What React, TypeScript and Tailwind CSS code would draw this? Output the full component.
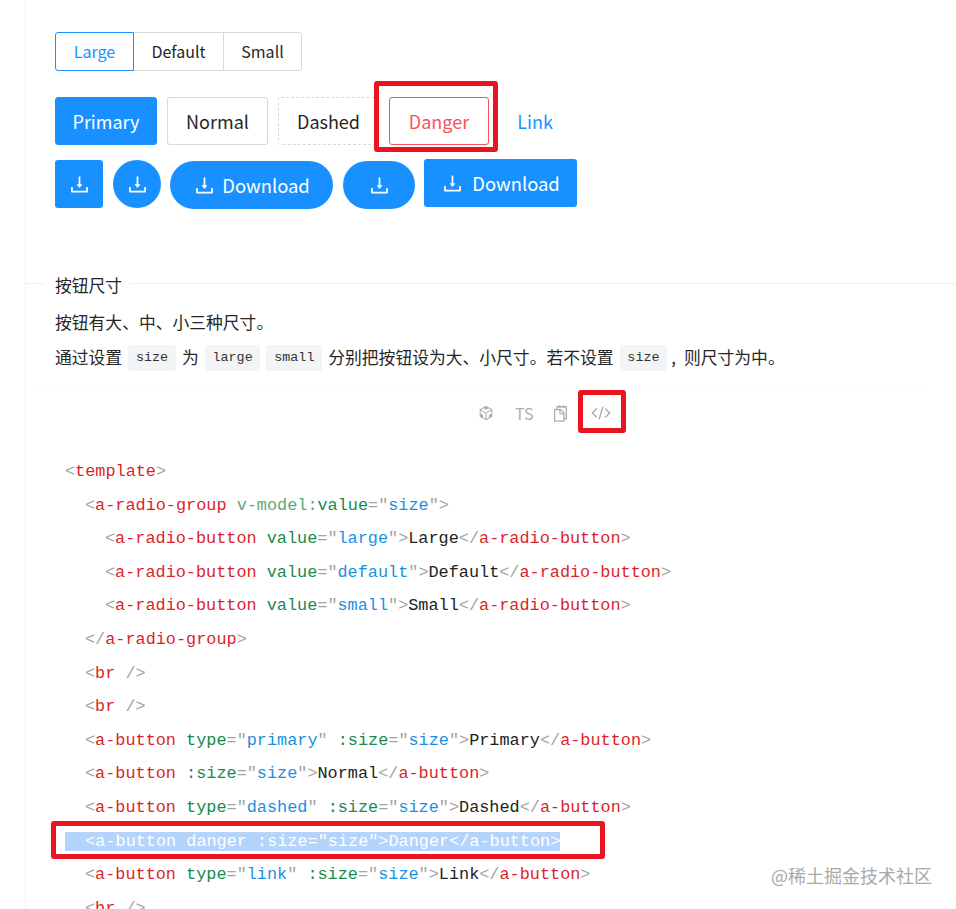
import { AiOutlineCodeSandbox, AiOutlineDownload, AiOutlineSnippets } from 'react-icons/ai';

const P = 'text-[#a3a3a3]';
const T = 'text-[#dc1f2a]';
const A = 'text-[#178a4c]';
const M = 'text-[#5aa97c]';
const V = 'text-[#1a8fe3]';
const X = 'text-[#222222]';

type Token = [string, string];

const open = (name: string): Token[] => [[P, '<'], [T, name]];
const close = (name: string): Token[] => [[P, '</'], [T, name], [P, '>']];
const attr = (name: string, value: string): Token[] => [[A, name], [P, '="'], [V, value], [P, '"']];

const radio = (value: string, label: string): Token[] => [
  ...open('a-radio-button'),
  [X, ' '],
  ...attr('value', value),
  [P, '>'],
  [X, label],
  ...close('a-radio-button'),
];

const br: Token[] = [...open('br'), [P, ' />']];

// indent is in characters, two per level
const codeLines: { indent: string; tokens: Token[] }[] = [
  { indent: 'pl-0', tokens: [...open('template'), [P, '>']] },
  {
    indent: 'pl-[20px]',
    tokens: [...open('a-radio-group'), [X, ' '], [M, 'v-model:'], [A, 'value'], [P, '="'], [V, 'size'], [P, '">']],
  },
  { indent: 'pl-[40px]', tokens: radio('large', 'Large') },
  { indent: 'pl-[40px]', tokens: radio('default', 'Default') },
  { indent: 'pl-[40px]', tokens: radio('small', 'Small') },
  { indent: 'pl-[20px]', tokens: close('a-radio-group') },
  { indent: 'pl-[20px]', tokens: br },
  { indent: 'pl-[20px]', tokens: br },
  {
    indent: 'pl-[20px]',
    tokens: [...open('a-button'), [X, ' '], ...attr('type', 'primary'), [X, ' '], ...attr(':size', 'size'), [P, '>'], [X, 'Primary'], ...close('a-button')],
  },
  {
    indent: 'pl-[20px]',
    tokens: [...open('a-button'), [X, ' '], ...attr(':size', 'size'), [P, '>'], [X, 'Normal'], ...close('a-button')],
  },
  {
    indent: 'pl-[20px]',
    tokens: [...open('a-button'), [X, ' '], ...attr('type', 'dashed'), [X, ' '], ...attr(':size', 'size'), [P, '>'], [X, 'Dashed'], ...close('a-button')],
  },
];

const linkLine: Token[] = [
  ...open('a-button'),
  [X, ' '],
  ...attr('type', 'link'),
  [X, ' '],
  ...attr(':size', 'size'),
  [P, '>'],
  [X, 'Link'],
  ...close('a-button'),
];

function CodeLine({ indent, tokens }: { indent: string; tokens: Token[] }) {
  return (
    <div className={`h-[33.6px] leading-[33.6px] whitespace-pre ${indent}`}>
      {tokens.map(([color, text], i) => (
        <span key={i} className={color}>
          {text}
        </span>
      ))}
    </div>
  );
}

function Chip({ children }: { children: string }) {
  return (
    <code className="h-[26px] px-[7.8px] rounded-[3px] bg-[#f2f4f5] font-['Liberation_Mono',monospace] text-[13.4px] leading-[26px] text-[#333333]">
      {children}
    </code>
  );
}

function RedBox({ className }: { className: string }) {
  return <div className={`absolute border-[5px] border-[#e8141f] rounded-[3px] ${className}`} />;
}

export default function App() {
  return (
    <div className="relative w-[956px] h-[909px] overflow-hidden bg-white text-[#262626] font-['Noto_Sans_CJK_SC','Noto_Sans',sans-serif]">
      <div className="ml-[25px] h-full border-l border-[#f3f3f3] pl-[29px] pt-8">
        {/* Radio group */}
        <div className="flex h-[39px] w-[247px] text-[16px] leading-[37px]">
          <div className="w-[79px] text-center rounded-l-[3px] border border-[#1890ff] text-[#1890ff]">Large</div>
          <div className="w-[90px] text-center border-y border-r border-[#d9d9d9]">Default</div>
          <div className="w-[78px] text-center rounded-r-[3px] border-y border-r border-[#d9d9d9]">Small</div>
        </div>

        {/* Button types */}
        <div className="flex gap-[10px] mt-[26px] text-[18px] leading-[47px]">
          <div className="w-[102px] h-12 text-center rounded-[3px] border border-[#1890ff] bg-[#1890ff] text-white">Primary</div>
          <div className="w-[101px] h-12 text-center rounded-[3px] border border-[#d9d9d9]">Normal</div>
          <div className="w-[101px] h-12 text-center rounded-[3px] border border-dashed border-[#d9d9d9]">Dashed</div>
          <div className="w-[100px] h-12 text-center rounded-[3px] border border-[#f5525a] text-[#f5525a]">Danger</div>
          <div className="w-[72px] h-12 text-center leading-[49px] text-[#1890ff]">Link</div>
        </div>

        {/* Icon buttons */}
        <div className="flex items-start mt-[15px] text-[18.4px] text-white">
          <div className="flex items-center justify-center w-12 h-12 rounded-[3px] bg-[#1890ff]">
            <AiOutlineDownload size={23} />
          </div>
          <div className="flex items-center justify-center w-12 h-12 ml-[10px] rounded-full bg-[#1890ff]">
            <AiOutlineDownload size={23} />
          </div>
          <div className="flex items-center justify-center gap-[6px] w-[163px] h-12 ml-[9px] mt-px rounded-full bg-[#1890ff]">
            <AiOutlineDownload size={23} />
            <span className="mt-px">Download</span>
          </div>
          <div className="flex items-center justify-center w-[72px] h-12 ml-[10px] mt-px rounded-full bg-[#1890ff]">
            <AiOutlineDownload size={23} />
          </div>
          <div className="flex items-center justify-center gap-[8px] w-[153px] h-12 ml-[9px] -mt-px rounded-[3px] bg-[#1890ff]">
            <AiOutlineDownload size={23} />
            <span className="mt-px">Download</span>
          </div>
        </div>

        {/* Section heading with divider */}
        <div className="flex items-center -ml-[29px] mt-[63px] h-[26px] text-[16.8px]">
          <div className="w-[19px] h-px -mt-[3px] bg-[#f0f0f0]" />
          <div className="pl-[10px] pr-[8px] leading-[26px]">按钮尺寸</div>
          <div className="flex-1 h-px -mt-[3px] bg-[#f0f0f0]" />
        </div>

        <p className="mt-[11px] text-[16.8px] leading-[26px]">按钮有大、中、小三种尺寸。</p>
        <div className="flex items-center gap-[6px] mt-[10px] h-[26px] text-[16.8px] whitespace-nowrap">
          <span>通过设置</span>
          <Chip>size</Chip>
          <span>为</span>
          <Chip>large</Chip>
          <Chip>small</Chip>
          <span>分别把按钮设为大、小尺寸。若不设置</span>
          <Chip>size</Chip>
          <span className="-ml-[2px]">,</span>
          <span className="ml-[2px]">则尺寸为中。</span>
        </div>

        {/* Demo toolbar */}
        <div className="-ml-[19px] mt-[17px] w-[890px] border-t border-dashed border-[#f7f7f7]" />
        <div className="flex items-center h-[48px] ml-[422px] text-[#aeaeae]">
          <AiOutlineCodeSandbox size={18} />
          <span className="ml-[20px] text-[16px]">TS</span>
          <AiOutlineSnippets size={19} className="ml-[18px]" />
          <svg viewBox="0 0 24 24" className="ml-[20px] w-[22px] h-[22px]" fill="none" stroke="currentColor" strokeWidth="1.6">
            <path d="M7.5 7 2.5 12l5 5M16.5 7l5 5-5 5M14 5l-4 14" />
          </svg>
        </div>

        {/* Source code */}
        <div className="ml-[10px] mt-[18px] font-['Liberation_Mono',monospace] text-[16.85px]">
          {codeLines.map((line, i) => (
            <CodeLine key={i} indent={line.indent} tokens={line.tokens} />
          ))}
          <div className="h-[33.6px] leading-[33.6px] whitespace-pre">
            <span className="bg-[#b4d4fb] text-white">{'  <a-button danger :size="size">Danger</a-button>'}</span>
          </div>
          <CodeLine indent="pl-[20px]" tokens={linkLine} />
          <CodeLine indent="pl-[20px]" tokens={br} />
        </div>
      </div>

      {/* Annotation boxes */}
      <RedBox className="left-[374px] top-[81px] w-[124px] h-[71px]" />
      <RedBox className="left-[578px] top-[390px] w-[48px] h-[43px]" />
      <RedBox className="left-[51px] top-[821px] w-[554px] h-[38px]" />

      {/* Watermark */}
      <div className="absolute left-[771px] top-[862px] text-[18px] leading-[26px] text-[#a9a9a9]">@稀土掘金技术社区</div>
    </div>
  );
}
